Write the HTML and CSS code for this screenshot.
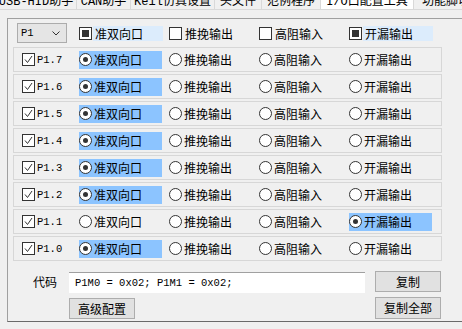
FILE: index.html
```html
<!DOCTYPE html>
<html>
<head>
<meta charset="utf-8">
<link rel="stylesheet" href="styles.css">
</head>
<body>
<div class="tabs">
  <div class="tab w1">USB-HID助手</div>
  <div class="tab w2">CAN助手</div>
  <div class="tab w3">Keil仿真设置</div>
  <div class="tab w4">头文件</div>
  <div class="tab w5">范例程序</div>
  <div class="tab w6 active">I/O口配置工具</div>
  <div class="tab w7">功能脚切换</div>
</div>
<div class="panel">
  <div class="head">
    <div class="pin">
      <div class="combo"><span class="mono">P1</span><svg width="8" height="5" viewBox="0 0 8 5"><polyline points="0.5,0.5 4,4 7.5,0.5" fill="none" stroke="#333" stroke-width="1"/></svg></div>
    </div>
    <div class="opt"><span class="cb ind"></span><span class="htxt hl">准双向口</span></div>
    <div class="opt"><span class="cb"></span><span class="htxt">推挽输出</span></div>
    <div class="opt"><span class="cb"></span><span class="htxt">高阻输入</span></div>
    <div class="opt"><span class="cb ind"></span><span class="htxt hl">开漏输出</span></div>
  </div>
  <div class="rows">
    <div class="row">
      <div class="pin"><span class="cb"><svg width="11" height="11" viewBox="0 0 11 11"><path d="M2 5.5 L4.5 8.5 L9 2" fill="none" stroke="#333"/></svg></span><span class="mono">P1.7</span></div>
      <div class="opt"><div class="lab sel"><span class="rb on"></span>准双向口</div></div>
      <div class="opt"><div class="lab"><span class="rb"></span>推挽输出</div></div>
      <div class="opt"><div class="lab"><span class="rb"></span>高阻输入</div></div>
      <div class="opt"><div class="lab"><span class="rb"></span>开漏输出</div></div>
    </div>
    <div class="row">
      <div class="pin"><span class="cb"><svg width="11" height="11" viewBox="0 0 11 11"><path d="M2 5.5 L4.5 8.5 L9 2" fill="none" stroke="#333"/></svg></span><span class="mono">P1.6</span></div>
      <div class="opt"><div class="lab sel"><span class="rb on"></span>准双向口</div></div>
      <div class="opt"><div class="lab"><span class="rb"></span>推挽输出</div></div>
      <div class="opt"><div class="lab"><span class="rb"></span>高阻输入</div></div>
      <div class="opt"><div class="lab"><span class="rb"></span>开漏输出</div></div>
    </div>
    <div class="row">
      <div class="pin"><span class="cb"><svg width="11" height="11" viewBox="0 0 11 11"><path d="M2 5.5 L4.5 8.5 L9 2" fill="none" stroke="#333"/></svg></span><span class="mono">P1.5</span></div>
      <div class="opt"><div class="lab sel"><span class="rb on"></span>准双向口</div></div>
      <div class="opt"><div class="lab"><span class="rb"></span>推挽输出</div></div>
      <div class="opt"><div class="lab"><span class="rb"></span>高阻输入</div></div>
      <div class="opt"><div class="lab"><span class="rb"></span>开漏输出</div></div>
    </div>
    <div class="row">
      <div class="pin"><span class="cb"><svg width="11" height="11" viewBox="0 0 11 11"><path d="M2 5.5 L4.5 8.5 L9 2" fill="none" stroke="#333"/></svg></span><span class="mono">P1.4</span></div>
      <div class="opt"><div class="lab sel"><span class="rb on"></span>准双向口</div></div>
      <div class="opt"><div class="lab"><span class="rb"></span>推挽输出</div></div>
      <div class="opt"><div class="lab"><span class="rb"></span>高阻输入</div></div>
      <div class="opt"><div class="lab"><span class="rb"></span>开漏输出</div></div>
    </div>
    <div class="row">
      <div class="pin"><span class="cb"><svg width="11" height="11" viewBox="0 0 11 11"><path d="M2 5.5 L4.5 8.5 L9 2" fill="none" stroke="#333"/></svg></span><span class="mono">P1.3</span></div>
      <div class="opt"><div class="lab sel"><span class="rb on"></span>准双向口</div></div>
      <div class="opt"><div class="lab"><span class="rb"></span>推挽输出</div></div>
      <div class="opt"><div class="lab"><span class="rb"></span>高阻输入</div></div>
      <div class="opt"><div class="lab"><span class="rb"></span>开漏输出</div></div>
    </div>
    <div class="row">
      <div class="pin"><span class="cb"><svg width="11" height="11" viewBox="0 0 11 11"><path d="M2 5.5 L4.5 8.5 L9 2" fill="none" stroke="#333"/></svg></span><span class="mono">P1.2</span></div>
      <div class="opt"><div class="lab sel"><span class="rb on"></span>准双向口</div></div>
      <div class="opt"><div class="lab"><span class="rb"></span>推挽输出</div></div>
      <div class="opt"><div class="lab"><span class="rb"></span>高阻输入</div></div>
      <div class="opt"><div class="lab"><span class="rb"></span>开漏输出</div></div>
    </div>
    <div class="row">
      <div class="pin"><span class="cb"><svg width="11" height="11" viewBox="0 0 11 11"><path d="M2 5.5 L4.5 8.5 L9 2" fill="none" stroke="#333"/></svg></span><span class="mono">P1.1</span></div>
      <div class="opt"><div class="lab"><span class="rb"></span>准双向口</div></div>
      <div class="opt"><div class="lab"><span class="rb"></span>推挽输出</div></div>
      <div class="opt"><div class="lab"><span class="rb"></span>高阻输入</div></div>
      <div class="opt"><div class="lab sel"><span class="rb on"></span>开漏输出</div></div>
    </div>
    <div class="row">
      <div class="pin"><span class="cb"><svg width="11" height="11" viewBox="0 0 11 11"><path d="M2 5.5 L4.5 8.5 L9 2" fill="none" stroke="#333"/></svg></span><span class="mono">P1.0</span></div>
      <div class="opt"><div class="lab sel"><span class="rb on"></span>准双向口</div></div>
      <div class="opt"><div class="lab"><span class="rb"></span>推挽输出</div></div>
      <div class="opt"><div class="lab"><span class="rb"></span>高阻输入</div></div>
      <div class="opt"><div class="lab"><span class="rb"></span>开漏输出</div></div>
    </div>
  </div>
  <div class="code">
    <div class="clabel">代码</div>
    <div class="cinput mono">P1M0 = 0x02; P1M1 = 0x02;</div>
    <div class="btn b1">复制</div>
    <div></div>
    <div><div class="btn b2">高级配置</div></div>
    <div class="btn b3">复制全部</div>
  </div>
</div>
</body>
</html>
```
FILE: styles.css
```css
* { box-sizing: border-box; margin: 0; padding: 0; }
html, body { width: 462px; height: 329px; overflow: hidden; background: #f0f0f0; }
body { font-family: "Noto Sans CJK SC", "Noto Sans", sans-serif; font-size: 12px; color: #000; }
.mono { font-family: "Liberation Mono", "Noto Sans CJK SC", monospace; font-size: 10.5px; }

.tabs { display: flex; align-items: flex-end; height: 10px; margin-left: -4px; border-bottom: 1px solid #d9d9d9; overflow: hidden; }
.tab { flex-shrink: 0; height: 16px; line-height: 18px; text-align: center; border-right: 1px solid #d9d9d9; font-family: "Liberation Mono", "Noto Sans CJK SC", sans-serif; font-size: 12px; white-space: nowrap; overflow: hidden; }
.tab.active { background: #fff; }
.w1 { width: 81px; }
.w2 { width: 54px; }
.w3 { width: 84px; }
.w4 { width: 47px; }
.w5 { width: 59px; }
.w6 { width: 93px; }
.w7 { width: 70px; text-align: left; padding-left: 8px; }

.panel { margin: 8px 0 0 7px; width: 470px; border: 1px solid #a0a0a0; border-bottom-color: #6a6a6a; border-right: none; padding: 4px 0 2px 5px; }

.head { display: flex; align-items: center; height: 20px; padding-left: 1px; }
.pin { width: 65px; display: flex; align-items: center; flex-shrink: 0; }
.head .pin { padding-left: 3px; }
.combo { width: 50px; height: 20px; background: #e5e5e5; border: 1px solid #acacac; display: flex; align-items: center; justify-content: space-between; padding: 0 6px 0 3px; }
.opt { width: 90px; flex-shrink: 0; display: flex; align-items: center; }
.htxt { display: flex; align-items: center; height: 15px; width: 70px; padding-left: 2px; margin-left: 1px; }
.hl { background: #dcecfc; }

.cb { width: 13px; height: 13px; border: 1px solid #333; background: #fff; display: flex; align-items: center; justify-content: center; flex-shrink: 0; }
.cb.ind::after { content: ""; width: 7px; height: 7px; background: #333; }
.cb svg { display: block; }

.rows { margin-top: 4px; }
.row { display: flex; align-items: center; width: 429px; height: 25px; border: 1px solid #d7d7d7; }
.row + .row { margin-top: 2px; }
.row .pin { padding-left: 8px; gap: 2px; }
.lab { width: 83px; height: 18px; display: flex; align-items: center; gap: 2px; }
.lab.sel { background: #8cc4ff; }
.rb { width: 13px; height: 13px; border: 1px solid #333; border-radius: 50%; background: #fff; display: flex; align-items: center; justify-content: center; flex-shrink: 0; }
.rb.on::after { content: ""; width: 5px; height: 5px; border-radius: 50%; background: #333; }

.code { display: grid; grid-template-columns: 56px 306px 66px; grid-template-rows: 22px 22px; row-gap: 4px; margin-top: 10px; }
.clabel { text-align: right; padding-right: 12px; line-height: 22px; }
.cinput { width: 296px; margin-top: 1px; height: 21px; background: #fff; border-top: 1px solid #a0a0a0; padding-left: 6px; line-height: 20px; white-space: nowrap; }
.btn { background: #e1e1e1; border: 1px solid #adadad; text-align: center; height: 22px; line-height: 20px; }
.b1 { height: 21px; }
.b2 { width: 66px; margin-top: 1px; height: 21px; }
```
